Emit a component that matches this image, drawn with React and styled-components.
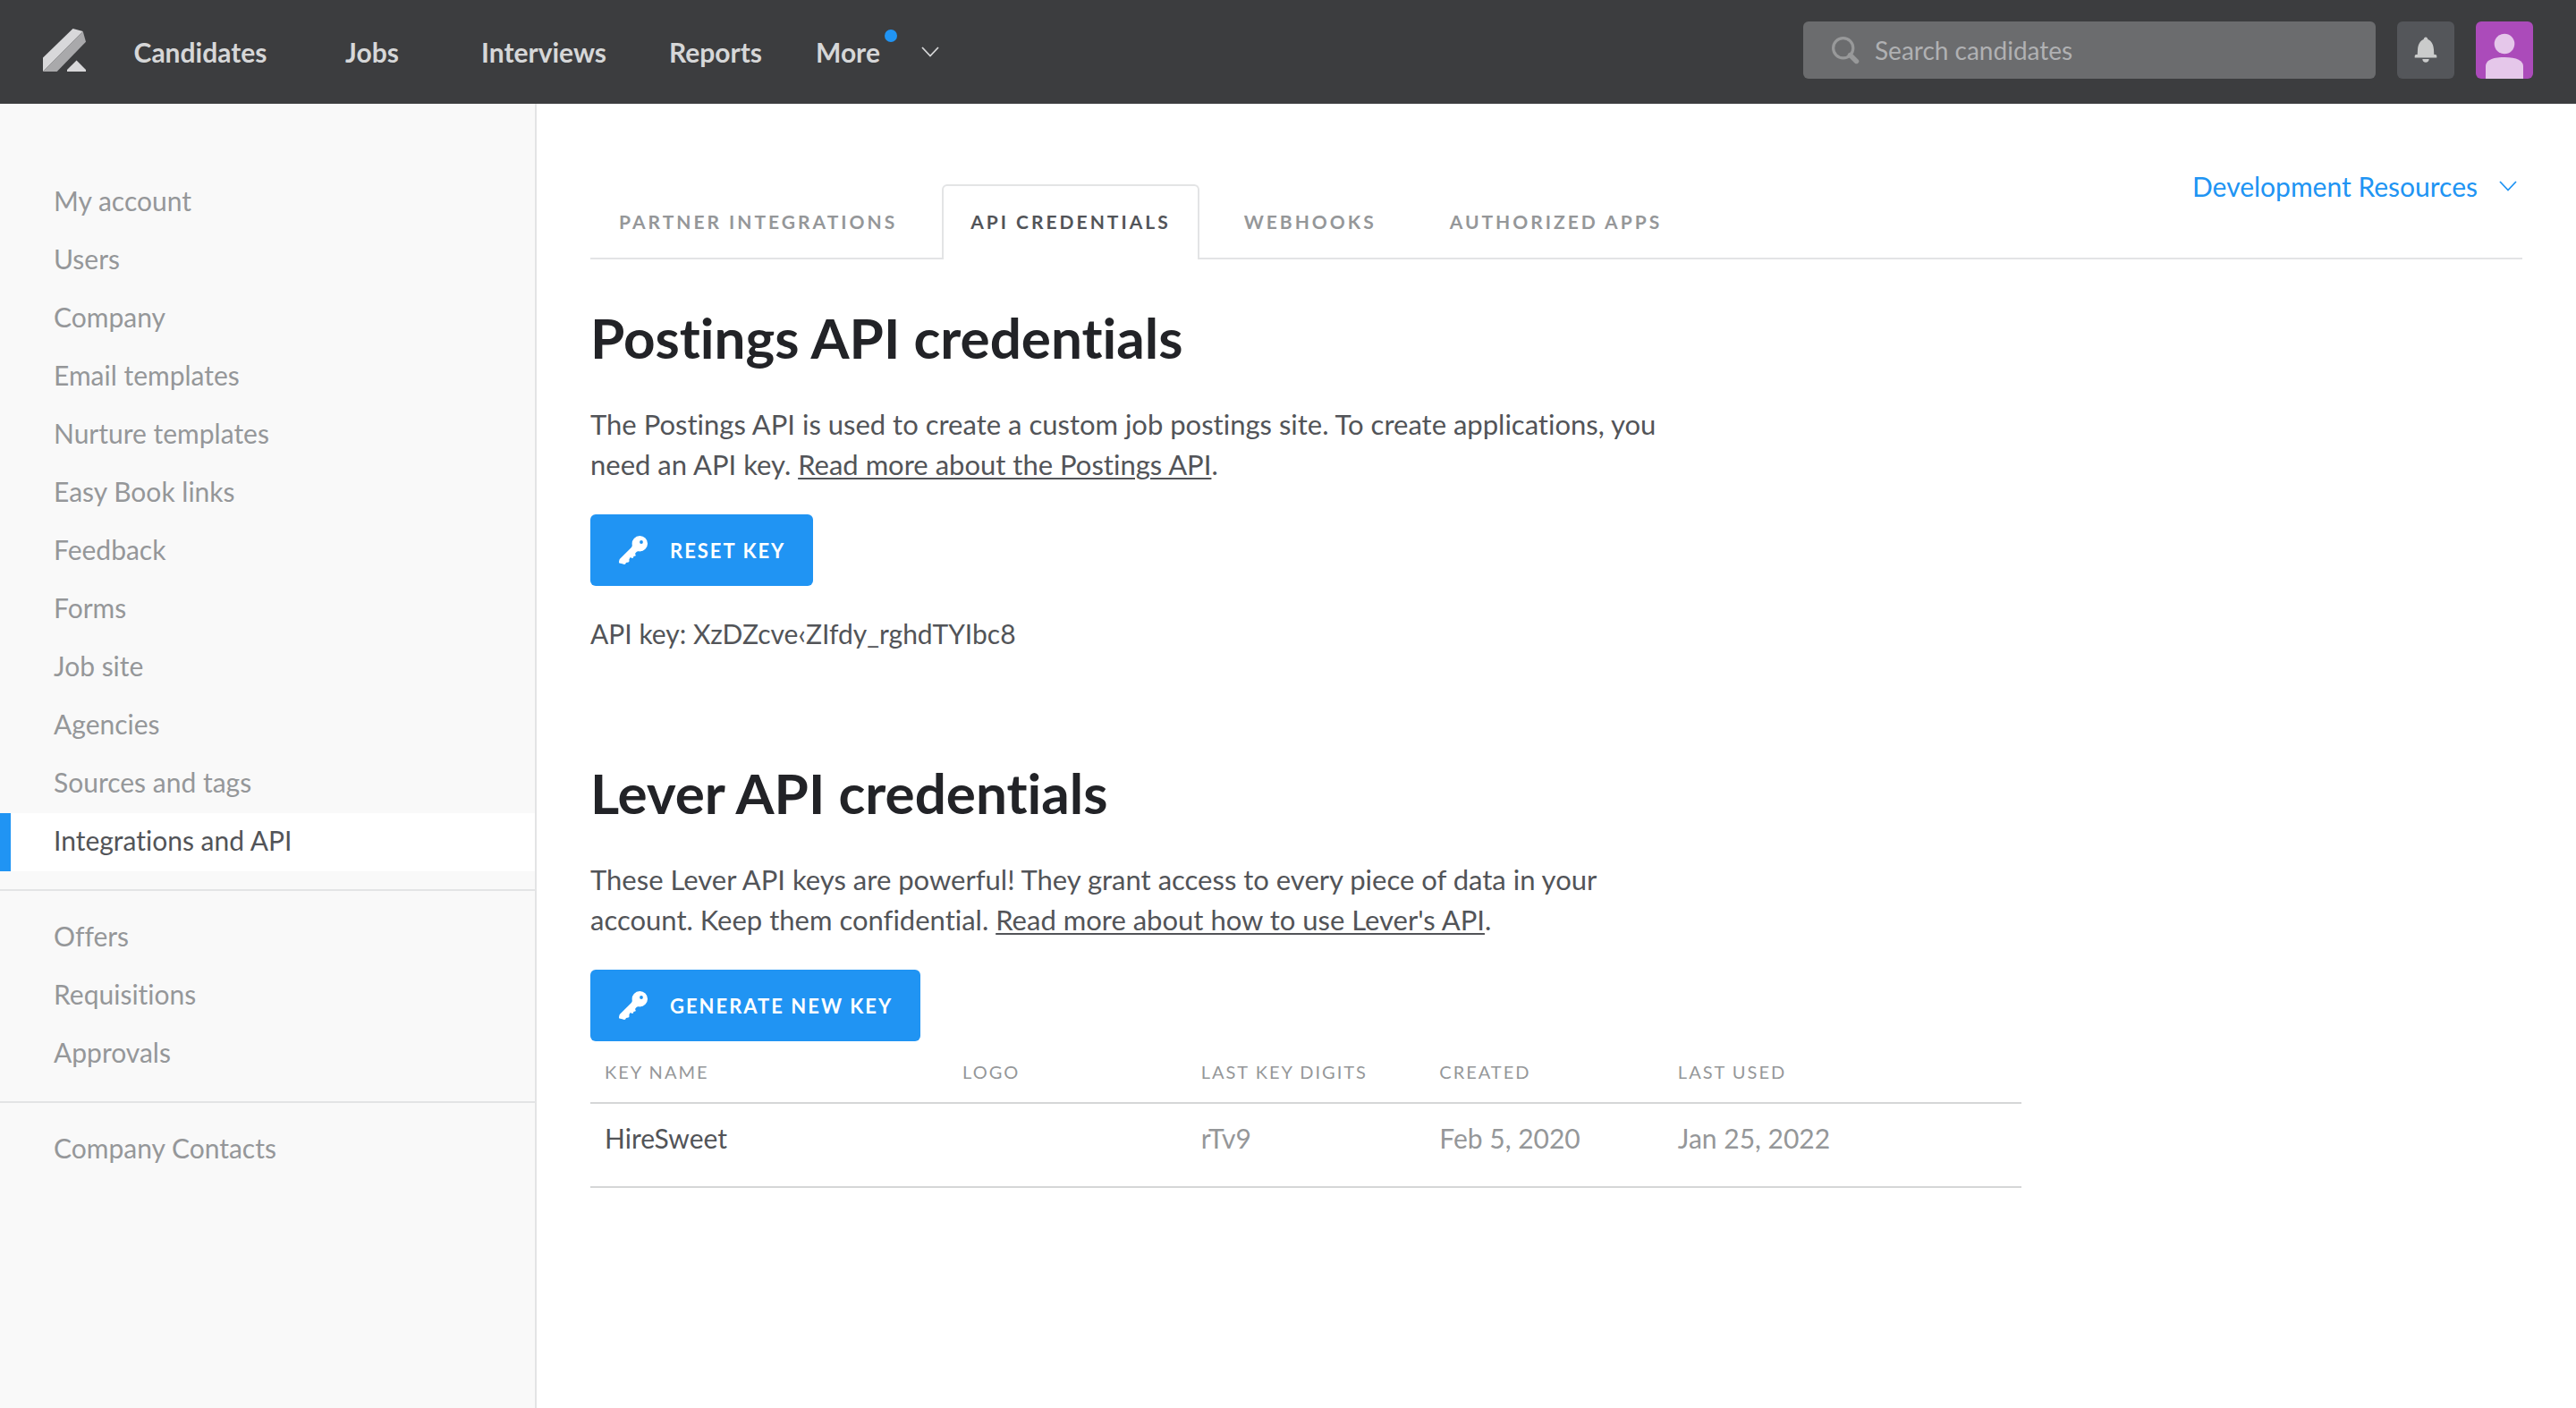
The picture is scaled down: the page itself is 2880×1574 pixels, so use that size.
import React from 'react';
import styled, { createGlobalStyle, css } from 'styled-components';

const color = {
  bar: '#3c3d3f',
  barText: '#d6d7d8',
  blue: '#2094f3',
  ink: '#525458',
  heading: '#222327',
  muted: '#959799',
  line: '#e3e4e5',
  tableLine: '#d5d6d7',
  side: '#f9f9f9',
};

const GlobalStyle = createGlobalStyle`
  *, *::before, *::after { box-sizing: border-box; }
  body {
    margin: 0;
    background: #fff;
    color: ${color.ink};
    font-family: Lato, "Open Sans", sans-serif;
    font-size: 30px;
    font-variant-ligatures: none;
  }
  button, input { font: inherit; color: inherit; }
  svg { display: block; flex: none; }
`;

const Page = styled.div`
  min-height: 100vh;
  display: flex;
  flex-direction: column;
`;

const plainButton = css`
  margin: 0;
  padding: 0;
  border: 0;
  background: none;
  cursor: pointer;
`;

/* Top bar */

const TopBar = styled.header`
  display: flex;
  align-items: center;
  height: 116px;
  padding: 0 48px;
  background: ${color.bar};
  color: ${color.barText};
`;

const HomeLink = styled.a`
  margin: -4px 32px 0 0;
`;

const PrimaryNav = styled.nav`
  display: flex;
  flex: 1;
  font-weight: 700;
`;

const NavLink = styled.a`
  width: 192px;
  text-align: center;
  color: inherit;
  text-decoration: none;
`;

const MoreButton = styled.button`
  ${plainButton}
  display: flex;
  align-items: center;
  gap: 46px;
  padding-left: 16px;
`;

const MoreLabel = styled.span`
  position: relative;
`;

const NewDot = styled.span`
  position: absolute;
  top: -7px;
  right: -19px;
  width: 14px;
  height: 14px;
  border-radius: 50%;
  background: ${color.blue};
`;

const Tools = styled.div`
  display: flex;
  align-items: center;
  gap: 24px;
  margin-top: -4px;
`;

const SearchBox = styled.label`
  display: flex;
  align-items: center;
  gap: 17px;
  width: 640px;
  height: 64px;
  padding: 0 32px;
  border-radius: 6px;
  background: #6b6c6e;
`;

const SearchInput = styled.input`
  flex: 1;
  min-width: 0;
  padding: 0;
  border: 0;
  outline: 0;
  background: none;
  font-size: 28px;
  &::placeholder { color: #b0b1b3; opacity: 1; }
`;

const SquareButton = styled.button`
  ${plainButton}
  display: flex;
  align-items: center;
  justify-content: center;
  width: 64px;
  height: 64px;
  border-radius: 6px;
  overflow: hidden;
  background: ${(p) => p.$tint};
`;

/* Sidebar */

const Body = styled.div`
  display: flex;
  flex: 1;
`;

const Sidebar = styled.nav`
  flex: none;
  width: 600px;
  padding-top: 78px;
  border-right: 2px solid ${color.line};
  background: ${color.side};
`;

const SideGroup = styled.ul`
  list-style: none;
  margin: 0;
  padding: 0 0 20px;
  & + & {
    padding-top: 20px;
    border-top: 2px solid ${color.line};
  }
`;

const SideLink = styled.a`
  display: block;
  padding: 0 48px 4px;
  border-left: 12px solid ${(p) => (p.$active ? color.blue : 'transparent')};
  background: ${(p) => (p.$active ? '#fff' : 'none')};
  color: ${(p) => (p.$active ? color.ink : color.muted)};
  line-height: 61px;
  text-decoration: none;
`;

/* Main column */

const Main = styled.main`
  flex: 1;
  min-width: 0;
  padding: 70px 60px 120px;
`;

const TabBar = styled.div`
  display: flex;
  justify-content: space-between;
  align-items: flex-end;
  height: 104px;
  margin-bottom: 51px;
  border-bottom: 2px solid ${color.line};
`;

const Tabs = styled.nav`
  display: flex;
  gap: 18px;
  margin-bottom: -2px;
`;

const Tab = styled.a`
  padding: 0 30px 2px;
  border: 2px solid transparent;
  border-bottom: 0;
  border-radius: 6px 6px 0 0;
  color: ${color.muted};
  font-size: 21px;
  font-weight: 700;
  letter-spacing: 3px;
  line-height: 80px;
  text-decoration: none;
  ${(p) => p.$active && css`
    border-color: ${color.line};
    background: #fff;
    color: ${color.ink};
  `}
`;

const ResourcesButton = styled.button`
  ${plainButton}
  display: flex;
  align-items: center;
  align-self: flex-start;
  gap: 24px;
  height: 44px;
  padding-right: 6px;
  color: ${color.blue};
`;

const Section = styled.section`
  & + & { margin-top: 119px; }
`;

const Title = styled.h1`
  margin: 0 0 39px;
  color: ${color.heading};
  font-size: 62px;
  font-weight: 700;
  line-height: 72px;
`;

const Copy = styled.p`
  max-width: 1210px;
  margin: 0;
  font-size: 31px;
  line-height: 45px;
`;

const KeyValue = styled.p`
  margin: 31px 0 0;
  line-height: 45px;
`;

const CopyLink = styled.a`
  color: inherit;
  text-decoration-thickness: 2px;
  text-underline-offset: 3px;
`;

const ActionButton = styled.button`
  ${plainButton}
  display: flex;
  align-items: center;
  gap: 25px;
  height: 80px;
  margin-top: 33px;
  padding: 0 31px 0 32px;
  border-radius: 6px;
  background: ${color.blue};
  color: #fff;
  font-size: 22px;
  font-weight: 700;
  letter-spacing: 2px;
`;

const KeyTable = styled.table`
  width: 1600px;
  max-width: 100%;
  table-layout: fixed;
  border-collapse: separate;
  border-spacing: 0;
  text-align: left;
`;

const HeadCell = styled.th`
  width: ${(p) => p.$width};
  padding: 0 16px;
  border-bottom: 2px solid ${color.tableLine};
  color: ${color.muted};
  font-size: 20px;
  font-weight: 400;
  letter-spacing: 2px;
  line-height: 68px;
`;

const Cell = styled.td`
  padding: 0 16px 16px;
  border-bottom: 2px solid ${color.tableLine};
  color: ${(p) => (p.$strong ? color.ink : color.muted)};
  line-height: 76px;
`;

/* Icons */

const Logo = () => (
  <svg width="48" height="48" viewBox="0 0 48 48" aria-hidden="true">
    <path d="M33.5 0 44.7 3 0 48V32.5z" fill="#d8d8da" />
    <path d="M44.7 3 48 14.7 15.7 48H0z" fill="#a9a9ab" />
    <path d="M37.6 35.6 48 46v2H27v-2z" fill="#d8d8da" />
  </svg>
);

const Chevron = ({ size }) => (
  <svg width={size} height={size / 2 + 2} viewBox="0 0 20 12" fill="none" stroke="currentColor" strokeWidth="1.8" aria-hidden="true">
    <path d="m1 1 9 9.5L19 1" />
  </svg>
);

const SearchIcon = () => (
  <svg width="31" height="31" viewBox="0 0 31 31" fill="none" stroke="#98999a" aria-hidden="true">
    <circle cx="12.7" cy="12.7" r="11.1" strokeWidth="3.2" />
    <path d="m20.5 20.5 7 7" strokeWidth="5.4" strokeLinecap="round" />
  </svg>
);

const BellIcon = () => (
  <svg width="26" height="30" viewBox="0 0 26 30" fill="#cacbcb" aria-hidden="true">
    <path d="M13 .5c-1.4 0-2 1.2-2.4 2.6C6.4 5 4.2 9.3 4 14.5L3.700 20H2.200q-1.500 0-1.500 1.500v2h24.600v-2q0-1.500-1.500-1.500h-1.500L22 14.500c-.2-5.200-2.400-9.500-6.600-11.400C15 1.700 14.400.5 13 .5z" />
    <path d="M9.300 25h7.400c0 2.400-1.600 3.700-3.700 3.700S9.300 27.400 9.300 25z" />
  </svg>
);

const Person = () => (
  <svg width="64" height="64" viewBox="0 0 64 64" fill="#e5c7ea" aria-hidden="true">
    <circle cx="32" cy="25" r="11.3" />
    <path d="M11 64V50c0-6 7-10 21-10s21 4 21 10v14z" />
  </svg>
);

const KeyIcon = () => (
  <svg width="32" height="32" viewBox="0 0 32 32" fill="currentColor" aria-hidden="true">
    <path
      fillRule="evenodd"
      d="M23.300 0A8.700 8.700 0 0 0 14.700 9.800c.2 1.400.1 2.200-.8 3.200L1.300 25.500c-.7.700-.9 1.700-1.300 3.500-.1.900.5 1.700 1.600 1.800l3 .8c1 .4 2 .4 2.600-.2l.8-1.500 2.600-.5c.7-.2.9-.7.900-1.300l-.1-1.800 1.300-2.200 1.500.6c.6.200 1 .5 1.700-.1.500-.5.200-1 .4-1.500l1.900-.5c.6-.3.700-.8.400-1.400l-.6-1.200 1.600-2.100c.8-.7 1.700-.7 3.700-.5A8.700 8.700 0 1 0 23.300 0zM25 5.100a1.900 1.900 0 1 1 0 3.800 1.900 1.900 0 0 1 0-3.800z"
    />
  </svg>
);

/* Content */

const navItems = ['Candidates', 'Jobs', 'Interviews', 'Reports'];

const sideGroups = [
  [
    'My account', 'Users', 'Company', 'Email templates', 'Nurture templates', 'Easy Book links',
    'Feedback', 'Forms', 'Job site', 'Agencies', 'Sources and tags', 'Integrations and API',
  ],
  ['Offers', 'Requisitions', 'Approvals'],
  ['Company Contacts'],
];

const tabs = ['PARTNER INTEGRATIONS', 'API CREDENTIALS', 'WEBHOOKS', 'AUTHORIZED APPS'];

const columns = [
  ['KEY NAME', '25%'],
  ['LOGO', '16.66%'],
  ['LAST KEY DIGITS', '16.66%'],
  ['CREATED', '16.66%'],
  ['LAST USED', '25%'],
];

export default function App() {
  return (
    <Page>
      <GlobalStyle />
      <TopBar>
        <HomeLink href="#home" aria-label="Home"><Logo /></HomeLink>
        <PrimaryNav aria-label="Primary">
          {navItems.map((item) => <NavLink key={item} href="#nav">{item}</NavLink>)}
          <MoreButton type="button">
            <MoreLabel>More<NewDot /></MoreLabel>
            <Chevron size={20} />
          </MoreButton>
        </PrimaryNav>
        <Tools>
          <SearchBox>
            <SearchIcon />
            <SearchInput type="text" aria-label="Search candidates" placeholder="Search candidates" />
          </SearchBox>
          <SquareButton type="button" aria-label="Notifications" $tint="#54565a"><BellIcon /></SquareButton>
          <SquareButton type="button" aria-label="Profile" $tint="#ab4bba"><Person /></SquareButton>
        </Tools>
      </TopBar>
      <Body>
        <Sidebar aria-label="Settings">
          {sideGroups.map((group) => (
            <SideGroup key={group[0]}>
              {group.map((item) => (
                <li key={item}>
                  <SideLink href="#settings" $active={item === 'Integrations and API'}>{item}</SideLink>
                </li>
              ))}
            </SideGroup>
          ))}
        </Sidebar>
        <Main>
          <TabBar>
            <Tabs aria-label="Integrations">
              {tabs.map((tab) => (
                <Tab key={tab} href="#tab" $active={tab === 'API CREDENTIALS'}>{tab}</Tab>
              ))}
            </Tabs>
            <ResourcesButton type="button">
              Development Resources
              <Chevron size={20} />
            </ResourcesButton>
          </TabBar>
          <Section>
            <Title>Postings API credentials</Title>
            <Copy>
              The Postings API is used to create a custom job postings site. To create applications, you
              need an API key. <CopyLink href="#postings-api">Read more about the Postings API</CopyLink>.
            </Copy>
            <ActionButton type="button"><KeyIcon />RESET KEY</ActionButton>
            <KeyValue>API key: XzDZcve‹ZIfdy_rghdTYIbc8</KeyValue>
          </Section>
          <Section>
            <Title as="h2">Lever API credentials</Title>
            <Copy>
              These Lever API keys are powerful! They grant access to every piece of data in your
              account. Keep them confidential. <CopyLink href="#lever-api">Read more about how to use Lever's API</CopyLink>.
            </Copy>
            <ActionButton type="button"><KeyIcon />GENERATE NEW KEY</ActionButton>
            <KeyTable>
              <thead>
                <tr>{columns.map(([name, width]) => <HeadCell key={name} $width={width} scope="col">{name}</HeadCell>)}</tr>
              </thead>
              <tbody>
                <tr>
                  <Cell $strong>HireSweet</Cell>
                  <Cell />
                  <Cell>rTv9</Cell>
                  <Cell>Feb 5, 2020</Cell>
                  <Cell>Jan 25, 2022</Cell>
                </tr>
              </tbody>
            </KeyTable>
          </Section>
        </Main>
      </Body>
    </Page>
  );
}
